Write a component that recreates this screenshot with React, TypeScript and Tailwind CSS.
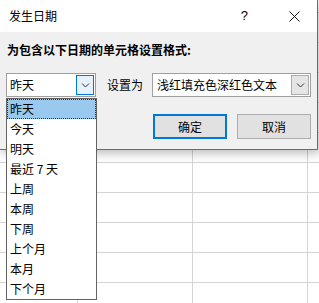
const FONT = "font-['Microsoft_YaHei','Noto_Sans_CJK_SC',sans-serif]";

const OPTIONS = [
  "昨天",
  "今天",
  "明天",
  "最近 7 天",
  "上周",
  "本周",
  "下周",
  "上个月",
  "本月",
  "下个月",
];

function Chevron() {
  return (
    <svg width="9" height="6" viewBox="0 0 9 6" fill="none">
      <path d="M1 1.5 L4.5 5 L8 1.5" stroke="#333" strokeWidth="1" />
    </svg>
  );
}

function Sheet() {
  const rows = Array.from({ length: 10 });
  return (
    <div className="w-[319px] h-[303px] bg-white flex flex-col">
      <div className="h-[13px] border-b border-[#d4d4d4] shrink-0" />
      {rows.map((_, i) => (
        <div key={i} className="h-[30px] shrink-0 flex border-b border-[#d4d4d4]">
          <div className="w-[78px] border-r border-[#d4d4d4]" />
          <div className="w-[115px] border-r border-[#d4d4d4]" />
          <div className="w-[115px] border-r border-[#d4d4d4]" />
        </div>
      ))}
    </div>
  );
}

function Dialog() {
  return (
    <div className="absolute left-0 top-0 w-[318px] h-[150px] flex flex-col border-r border-b border-[#1a7fd6] bg-[#f0f0f0] shadow-[2px_3px_10px_rgba(0,0,0,0.28)]">
      {/* title bar */}
      <div className="h-[32px] shrink-0 bg-white flex items-center pl-[9px] text-[12px] leading-[16px] text-black">
        <span>发生日期</span>
        <span className="ml-auto mr-[41px] font-['Liberation_Sans',sans-serif] text-[13px]">?</span>
        <svg width="11" height="11" viewBox="0 0 11 11" className="mr-[17px]">
          <path d="M0.5 0.5 L10.5 10.5 M10.5 0.5 L0.5 10.5" stroke="#111" strokeWidth="1" />
        </svg>
      </div>

      {/* body */}
      <div className="flex-1 flex flex-col pl-[6px] pr-[6px] text-[12px] leading-[16px] text-black">
        <div className="mt-[10px] ml-[1px] font-bold">为包含以下日期的单元格设置格式:</div>

        <div className="mt-[15px] flex items-center h-[24px]">
          <div className="w-[90px] h-[24px] flex items-center border border-[#a0a0a0] bg-white pr-[1px]">
            <span className="pl-[3px] flex-1">昨天</span>
            <div className="w-[18px] h-[20px] flex items-center justify-center border border-[#0078d7] bg-[#e5f1fb]">
              <Chevron />
            </div>
          </div>
          <span className="ml-[11px]">设置为</span>
          <div className="ml-[9px] w-[159px] h-[24px] flex items-center border border-[#a0a0a0] bg-white pr-[1px]">
            <span className="pl-[4px] flex-1 whitespace-nowrap">浅红填充色深红色文本</span>
            <div className="w-[18px] h-[20px] flex items-center justify-center border border-[#adadad] bg-[#e5e5e5]">
              <Chevron />
            </div>
          </div>
        </div>

        <div className="mt-[17px] flex justify-end gap-[10px]">
          <button className="w-[74px] h-[25px] border-2 border-[#0078d7] bg-[#e1e1e1] flex items-center justify-center">
            确定
          </button>
          <button className="w-[74px] h-[25px] border border-[#adadad] bg-[#e1e1e1] flex items-center justify-center">
            取消
          </button>
        </div>
      </div>
    </div>
  );
}

function DropList() {
  return (
    <div className="absolute left-[6px] top-[98px] w-[91px] border border-[#646464] bg-white text-[12px] text-black">
      {OPTIONS.map((o, i) => (
        <div
          key={o}
          className={
            i === 0
              ? "h-[20px] flex items-center pl-[2px] bg-[#99c9ef] border border-dotted border-[#333]"
              : "h-[20px] flex items-center pl-[3px]"
          }
        >
          {o}
        </div>
      ))}
    </div>
  );
}

export default function App() {
  return (
    <div className={`relative w-[319px] h-[303px] overflow-hidden ${FONT}`}>
      <Sheet />
      <Dialog />
      <DropList />
    </div>
  );
}
